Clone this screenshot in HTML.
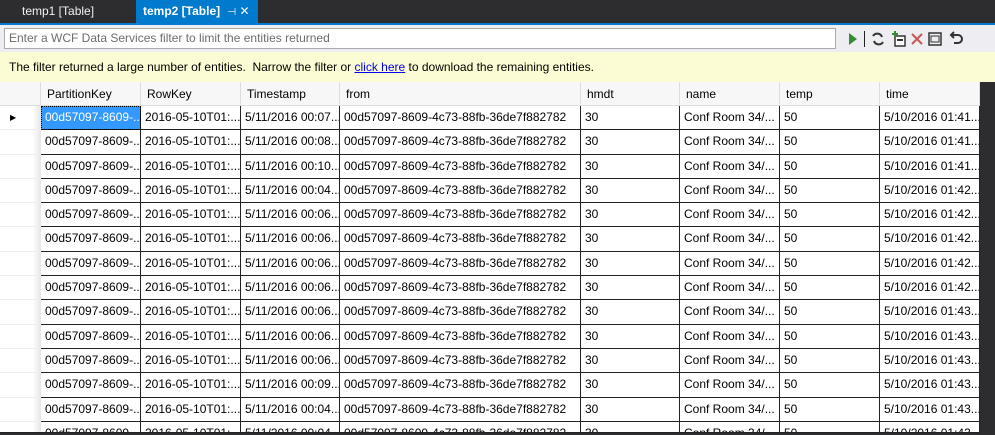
<!DOCTYPE html><html><head><style>
*{margin:0;padding:0;box-sizing:border-box}
body{width:995px;height:435px;overflow:hidden;background:#2d2d30;font-family:"Liberation Sans",sans-serif;font-size:12px;position:relative}
.tab{position:absolute;top:0;height:23px;line-height:23px;font-size:12px;color:#f1f1f1}
.bar{position:absolute;left:0;top:23px;width:995px;height:2px;background:#007acc}
.tb{position:absolute;left:0;top:25px;width:995px;height:27px;background:#eeeef2}
.inp{position:absolute;left:4px;top:3px;width:832px;height:21px;background:#fff;border:1px solid #ababab;color:#6d6d6d;line-height:19px;padding-left:4px;font-size:12px}
.yel{position:absolute;left:0;top:52px;width:995px;height:30px;background:#fcfcd4;line-height:31px;padding-left:9px;color:#000}
.yel a{color:#0000ee;text-decoration:underline}
.grid{position:absolute;left:0;top:82px;width:980px;height:351px;background:#fff;overflow:hidden;border-bottom:1px solid #222}
.hrow{position:relative;height:24px}
.hdr{position:absolute;top:0;height:24px;background:#f7f7f7;border-right:1px solid #ddd;border-bottom:1px solid #ddd;line-height:24px;padding-left:6px;color:#000}
.row{position:relative;width:980px;height:24.3px}
.row div{position:absolute;top:0;height:100%;border-right:1px solid #222;border-bottom:1px solid #222;padding-left:4px;line-height:23px;white-space:nowrap;overflow:hidden;color:#000}
.row div:nth-child(1){left:0;width:41px;background:linear-gradient(90deg,#fff 80%,#e6e6e6);border-right:none;border-bottom:1px solid #eee}
.row div:nth-child(2){left:41px;width:100px}
.row div:nth-child(3){left:141px;width:100px}
.row div:nth-child(4){left:241px;width:99px}
.row div:nth-child(5){left:340px;width:241px}
.row div:nth-child(6){left:581px;width:99px}
.row div:nth-child(7){left:680px;width:100px}
.row div:nth-child(8){left:780px;width:100px}
.row div:nth-child(9){left:880px;width:100px}
.row div.sel{background:#3399ff;color:#fff;outline:1px dotted #000;outline-offset:-1px}
</style></head><body>
<div class="tab" style="left:22px">temp1 [Table]</div>
<div class="tab" style="left:136px;width:122px;background:#007acc;color:#fff;font-weight:bold;padding-left:7px">temp2 [Table] <span style="font-weight:normal;font-size:10px;margin-left:4px">⊣</span> <span style="font-weight:normal">✕</span></div>
<div class="bar"></div>
<div class="tb"><div class="inp">Enter a WCF Data Services filter to limit the entities returned</div>
<svg style="position:absolute;left:845px;top:5px" width="150" height="18">
<path d="M4 3 L12 9 L4 15Z" fill="#388a34"/>
<rect x="19" y="1" width="1" height="16" fill="#222"/>
<path d="M28 6 a5 5 0 0 1 9 1 M38 12 a5 5 0 0 1 -9 -1" stroke="#333" stroke-width="2" fill="none"/>
<rect x="50" y="6" width="10" height="10" fill="#fff" stroke="#333" stroke-width="1.5"/><rect x="52" y="9" width="6" height="2" fill="#333"/>
<path d="M50 1v6M47 4h6" stroke="#388a34" stroke-width="2"/>
<path d="M67 4l10 10M77 4l-10 10" stroke="#c55" stroke-width="2"/>
<rect x="84" y="3" width="12" height="12" fill="none" stroke="#333" stroke-width="1.5"/><rect x="86" y="6" width="8" height="6" fill="none" stroke="#333"/>
<path d="M106 5h7a4 4 0 0 1 0 8h-4 M109 2l-3 3l3 3" stroke="#333" stroke-width="2" fill="none"/>
</svg></div>
<div class="yel">The filter returned a large number of entities.&nbsp; Narrow the filter or <a>click here</a> to download the remaining entities.</div>
<div class="grid">
<div class="hrow">
<div class="hdr" style="left:0;width:41px"></div>
<div class="hdr" style="left:41px;width:100px">PartitionKey</div>
<div class="hdr" style="left:141px;width:100px">RowKey</div>
<div class="hdr" style="left:241px;width:99px">Timestamp</div>
<div class="hdr" style="left:340px;width:241px">from</div>
<div class="hdr" style="left:581px;width:99px">hmdt</div>
<div class="hdr" style="left:680px;width:100px">name</div>
<div class="hdr" style="left:780px;width:100px">temp</div>
<div class="hdr" style="left:880px;width:100px">time</div>
</div>
<div class="row"><div><span style="position:absolute;left:10px;top:0;font-size:8px">&#9654;</span></div><div class="sel">00d57097-8609-...</div><div>2016-05-10T01:...</div><div>5/11/2016 00:07...</div><div>00d57097-8609-4c73-88fb-36de7f882782</div><div>30</div><div>Conf Room 34/...</div><div>50</div><div>5/10/2016 01:41...</div></div>
<div class="row"><div></div><div>00d57097-8609-...</div><div>2016-05-10T01:...</div><div>5/11/2016 00:08...</div><div>00d57097-8609-4c73-88fb-36de7f882782</div><div>30</div><div>Conf Room 34/...</div><div>50</div><div>5/10/2016 01:41...</div></div>
<div class="row"><div></div><div>00d57097-8609-...</div><div>2016-05-10T01:...</div><div>5/11/2016 00:10...</div><div>00d57097-8609-4c73-88fb-36de7f882782</div><div>30</div><div>Conf Room 34/...</div><div>50</div><div>5/10/2016 01:41...</div></div>
<div class="row"><div></div><div>00d57097-8609-...</div><div>2016-05-10T01:...</div><div>5/11/2016 00:04...</div><div>00d57097-8609-4c73-88fb-36de7f882782</div><div>30</div><div>Conf Room 34/...</div><div>50</div><div>5/10/2016 01:42...</div></div>
<div class="row"><div></div><div>00d57097-8609-...</div><div>2016-05-10T01:...</div><div>5/11/2016 00:06...</div><div>00d57097-8609-4c73-88fb-36de7f882782</div><div>30</div><div>Conf Room 34/...</div><div>50</div><div>5/10/2016 01:42...</div></div>
<div class="row"><div></div><div>00d57097-8609-...</div><div>2016-05-10T01:...</div><div>5/11/2016 00:06...</div><div>00d57097-8609-4c73-88fb-36de7f882782</div><div>30</div><div>Conf Room 34/...</div><div>50</div><div>5/10/2016 01:42...</div></div>
<div class="row"><div></div><div>00d57097-8609-...</div><div>2016-05-10T01:...</div><div>5/11/2016 00:06...</div><div>00d57097-8609-4c73-88fb-36de7f882782</div><div>30</div><div>Conf Room 34/...</div><div>50</div><div>5/10/2016 01:42...</div></div>
<div class="row"><div></div><div>00d57097-8609-...</div><div>2016-05-10T01:...</div><div>5/11/2016 00:06...</div><div>00d57097-8609-4c73-88fb-36de7f882782</div><div>30</div><div>Conf Room 34/...</div><div>50</div><div>5/10/2016 01:42...</div></div>
<div class="row"><div></div><div>00d57097-8609-...</div><div>2016-05-10T01:...</div><div>5/11/2016 00:06...</div><div>00d57097-8609-4c73-88fb-36de7f882782</div><div>30</div><div>Conf Room 34/...</div><div>50</div><div>5/10/2016 01:43...</div></div>
<div class="row"><div></div><div>00d57097-8609-...</div><div>2016-05-10T01:...</div><div>5/11/2016 00:06...</div><div>00d57097-8609-4c73-88fb-36de7f882782</div><div>30</div><div>Conf Room 34/...</div><div>50</div><div>5/10/2016 01:43...</div></div>
<div class="row"><div></div><div>00d57097-8609-...</div><div>2016-05-10T01:...</div><div>5/11/2016 00:06...</div><div>00d57097-8609-4c73-88fb-36de7f882782</div><div>30</div><div>Conf Room 34/...</div><div>50</div><div>5/10/2016 01:43...</div></div>
<div class="row"><div></div><div>00d57097-8609-...</div><div>2016-05-10T01:...</div><div>5/11/2016 00:09...</div><div>00d57097-8609-4c73-88fb-36de7f882782</div><div>30</div><div>Conf Room 34/...</div><div>50</div><div>5/10/2016 01:43...</div></div>
<div class="row"><div></div><div>00d57097-8609-...</div><div>2016-05-10T01:...</div><div>5/11/2016 00:04...</div><div>00d57097-8609-4c73-88fb-36de7f882782</div><div>30</div><div>Conf Room 34/...</div><div>50</div><div>5/10/2016 01:43...</div></div>
<div class="row"><div></div><div>00d57097-8609-...</div><div>2016-05-10T01:...</div><div>5/11/2016 00:04...</div><div>00d57097-8609-4c73-88fb-36de7f882782</div><div>30</div><div>Conf Room 34/...</div><div>50</div><div>5/10/2016 01:43...</div></div>
</div>
</body></html>
